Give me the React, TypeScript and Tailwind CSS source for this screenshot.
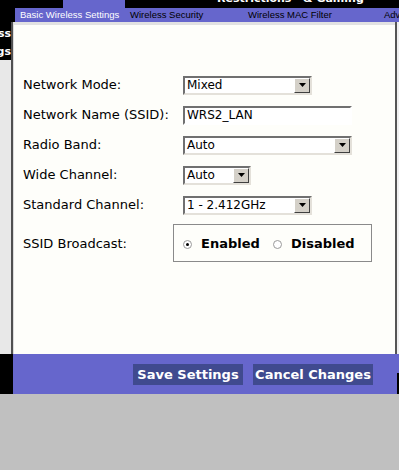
import React from 'react'

const font = { fontFamily: '"DejaVu Sans", Verdana, sans-serif' }

function Select({ value, width }: { value: string; width: string }) {
  return (
    <div
      className={`${width} h-[19px] flex items-stretch bg-white border-2 border-t-[#707070] border-l-[#707070] border-b-[#e4e1da] border-r-[#e4e1da]`}
    >
      <div className="flex-1 flex items-center pl-[2px] text-[12px] text-black leading-none">{value}</div>
      <div className="w-[16px] flex items-center justify-center bg-[#d4d0c8] border border-t-white border-l-white border-b-[#404040] border-r-[#404040]">
        <svg width="7" height="4" viewBox="0 0 7 4">
          <path d="M0 0h7L3.5 4z" fill="#000" />
        </svg>
      </div>
    </div>
  )
}

function Row({ label, children }: { label: string; children: React.ReactNode }) {
  return (
    <div className="h-[30px] flex items-center">
      <div className="w-[160px] text-[13px] text-black">{label}</div>
      {children}
    </div>
  )
}

function Radio({ checked }: { checked?: boolean }) {
  return (
    <span className="w-[9px] h-[9px] shrink-0 rounded-full border border-[#9a9a9a] bg-white flex items-center justify-center">
      {checked && <span className="w-[3px] h-[3px] rounded-full bg-black" />}
    </span>
  )
}

export default function App() {
  return (
    <div className="w-[399px] h-[470px] bg-[#c0c0c0] overflow-hidden" style={font}>
      {/* top tab strip, mostly scrolled off */}
      <div className="h-[8px] bg-black flex overflow-hidden">
        <div className="w-[63px] shrink-0" />
        <div className="w-[62px] shrink-0 bg-[#6666cc]" />
        <div className="w-[92px] shrink-0" />
        <span className="w-[86px] shrink-0 -mt-[8px] text-[11px] font-bold text-white leading-[13px] whitespace-nowrap">Restrictions</span>
        <span className="shrink-0 -mt-[8px] text-[11px] font-bold text-white leading-[13px] whitespace-nowrap">&amp; Gaming</span>
      </div>

      {/* sub tabs */}
      <div className="h-[14px] flex">
        <div className="w-[15px] bg-black" />
        <div
          className="flex-1 bg-[#6666cc] flex items-center pl-[5px] text-[9.5px] whitespace-nowrap overflow-hidden"
          style={{ fontFamily: '"Liberation Sans", Tahoma, sans-serif' }}
        >
          <span className="w-[110px] shrink-0 text-white">Basic Wireless Settings</span>
          <span className="w-[118px] shrink-0 text-black">Wireless Security</span>
          <span className="w-[136px] shrink-0 text-black">Wireless MAC Filter</span>
          <span className="shrink-0 text-black">Advanced Wireless Settings</span>
        </div>
      </div>

      {/* body */}
      <div className="h-[332px] flex">
        <div className="w-[11px] flex flex-col bg-[#e8e8e8]">
          <div className="h-[38px] bg-black flex flex-col items-end overflow-hidden text-[11px] font-bold text-white leading-none pt-[6px] gap-[7px]">
            <span className="whitespace-nowrap">Wireless</span>
            <span className="whitespace-nowrap">Settings</span>
          </div>
        </div>
        <div className="w-[2px] bg-[#505050]" />
        <div className="w-[1px] bg-[#dcdcdc]" />
        <div className="flex-1 bg-[#fefefa] border-t-[3px] border-[#e2e2e2] pl-[9px] pt-[45px]">
          <Row label="Network Mode:">
            <Select value="Mixed" width="w-[129px]" />
          </Row>
          <Row label="Network Name (SSID):">
            <div className="w-[169px] h-[19px] flex items-center pl-[2px] bg-white border-2 border-t-[#707070] border-l-[#707070] border-b-[#ffffff] border-r-[#ffffff] text-[12px] text-black">
              WRS2_LAN
            </div>
          </Row>
          <Row label="Radio Band:">
            <Select value="Auto" width="w-[169px]" />
          </Row>
          <Row label="Wide Channel:">
            <Select value="Auto" width="w-[68px]" />
          </Row>
          <Row label="Standard Channel:">
            <Select value="1 - 2.412GHz" width="w-[129px]" />
          </Row>
          <div className="mt-[4px] flex items-center">
            <div className="w-[150px] text-[13px] text-black pt-[2px]">SSID Broadcast:</div>
            <div className="w-[199px] h-[38px] border border-[#8a8a8a] flex items-center pl-[9px] pt-[2px] text-[13px] font-bold text-black">
              <Radio checked />
              <span className="ml-[9px] w-[72px]">Enabled</span>
              <Radio />
              <span className="ml-[9px]">Disabled</span>
            </div>
          </div>
        </div>
        <div className="w-[2px] bg-[#555555]" />
        <div className="w-[2px] bg-[#f0f0f0]" />
      </div>

      {/* footer */}
      <div className="h-[40px] flex">
        <div className="w-[13px] bg-black" />
        <div className="flex-1 bg-[#6666cc] flex items-center justify-end gap-[10px] pr-[24px]">
          <button className="w-[110px] h-[21px] bg-[#404a8f] text-white text-[13px] font-bold leading-none">Save Settings</button>
          <button className="w-[120px] h-[21px] bg-[#404a8f] text-white text-[13px] font-bold leading-none">Cancel Changes</button>
        </div>
        <div className="w-[2px] flex flex-col">
          <div className="h-[19px] bg-[#6666cc]" />
          <div className="flex-1 bg-black" />
        </div>
      </div>
    </div>
  )
}
